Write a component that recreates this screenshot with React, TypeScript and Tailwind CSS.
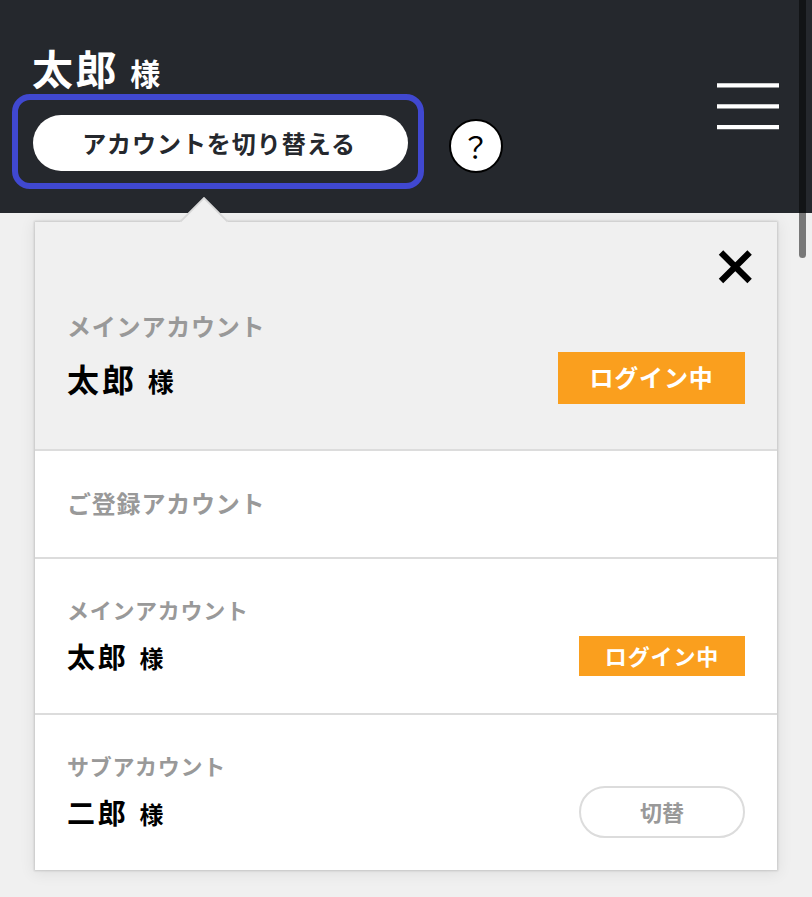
import clsx from 'clsx'

interface Account {
  id: string
  label: string
  name: string
  active: boolean
}

const accounts: Account[] = [
  { id: 'main', label: 'メインアカウント', name: '太郎', active: true },
  { id: 'sub', label: 'サブアカウント', name: '二郎', active: false },
]

function Header() {
  return (
    <header className="flex h-[213px] items-start justify-between bg-[#25282d] pr-[33px]">
      <div className="pt-[43px] pl-3">
        <h1 className="mb-[3px] flex h-12 items-baseline pl-5 leading-[48px] font-bold text-white">
          <span className="text-[41px] tracking-[2.6px]">太郎</span>
          <span className="ml-[11px] text-[30px]">様</span>
        </h1>
        <div className="flex items-center">
          <div className="h-[95px] w-[412px] rounded-[18px] border-6 border-[#4048d0] px-[15px] pt-[15px]">
            <button className="block h-14 w-[375px] rounded-full bg-white pr-[3px] text-[24px] font-bold tracking-[0.95px] text-[#25282d]">
              アカウントを切り替える
            </button>
          </div>
          <button className="mt-[9px] ml-[25px] flex size-[54px] items-center justify-center rounded-full border-2 border-black bg-white pt-px pr-px text-[29px] text-black">
            ？
          </button>
        </div>
      </div>
      <button aria-label="メニュー" className="mt-[83px]">
        <svg width="62" height="48" viewBox="0 0 62 48" stroke="#fff" strokeWidth="4.2">
          <path d="M0 2.4 H62 M0 23.4 H62 M0 44.2 H62" />
        </svg>
      </button>
    </header>
  )
}

function AccountRow({ account }: { account: Account }) {
  return (
    <li className="flex h-[156px] justify-between border-t-2 border-[#dcdcdc] pr-8 pl-8">
      <div className="pt-[34px] font-bold">
        <p className="h-8 text-[22px] leading-8 tracking-[0.7px] text-[#999]">{account.label}</p>
        <p className="mt-[11px] flex h-10 items-baseline leading-10 text-black">
          <span className="text-[28px] tracking-[2.7px]">{account.name}</span>
          <span className="ml-[11px] text-[24px]">様</span>
        </p>
      </div>
      <button
        className={clsx(
          'w-[166px] font-bold text-[22px]',
          account.active
            ? 'mt-[77px] h-10 bg-[#fa9f1e] pb-0.5 tracking-[0.9px] text-white'
            : 'mt-[71px] h-[52px] rounded-full border-2 border-[#dcdcdc] pb-0.5 text-[#999]'
        )}
      >
        {account.active ? 'ログイン中' : '切替'}
      </button>
    </li>
  )
}

function AccountMenu() {
  return (
    <section className="relative mx-[35px] mt-[9px] h-[648px] bg-white shadow-[0_0_2px_1px_rgba(0,0,0,0.14),0_2px_14px_2px_rgba(0,0,0,0.07)]">
      {/* pointer towards the switch button */}
      <svg className="absolute -top-[25px] left-[145px]" width="48" height="27" viewBox="0 0 48 27">
        <path d="M0 25 L24 1 L48 25 V27 H0 Z" fill="#f0f0f0" />
        <path d="M0.5 24.5 L24 1 L47.5 24.5" fill="none" stroke="#d8d8d8" strokeWidth="1.8" />
      </svg>
      <div className="flex h-[227px] justify-between bg-[#f0f0f0] pr-8 pl-8">
        <div className="pt-[87px] font-bold">
          <p className="h-[34px] text-[24px] leading-[34px] tracking-[0.8px] text-[#999]">メインアカウント</p>
          <p className="mt-3 flex h-[46px] items-baseline leading-[46px] text-black">
            <span className="text-[32px] tracking-[2.9px]">太郎</span>
            <span className="ml-[11px] text-[26px]">様</span>
          </p>
        </div>
        <div className="flex flex-col items-end">
          <button aria-label="閉じる" className="mt-[27px] -mr-[8px] size-9">
            <svg width="36" height="36" viewBox="0 0 36 36" stroke="#000" strokeWidth="6.3">
              <path d="M4 3.5 L32.6 32 M32.6 3.5 L4 32" />
            </svg>
          </button>
          <span className="mt-[67px] flex h-[52px] w-[187px] items-center justify-center bg-[#fa9f1e] pb-0.5 text-[24px] font-bold tracking-[0.8px] text-white">
            ログイン中
          </span>
        </div>
      </div>
      <h2 className="h-[108px] border-t-2 border-[#dcdcdc] pt-[35px] pl-8 text-[24px] leading-[34px] font-bold tracking-[0.8px] text-[#999]">
        ご登録アカウント
      </h2>
      <ul>
        {accounts.map((account) => (
          <AccountRow key={account.id} account={account} />
        ))}
      </ul>
    </section>
  )
}

export default function App() {
  return (
    <div className="relative h-[897px] w-[812px] overflow-hidden bg-[#f0f0f0] font-['Noto_Sans_CJK_JP',sans-serif]">
      <Header />
      <AccountMenu />
      {/* scrollbar thumb */}
      <div className="absolute top-0 right-[6px] h-[258px] w-[7px] rounded-b-full bg-black/50" />
    </div>
  )
}
